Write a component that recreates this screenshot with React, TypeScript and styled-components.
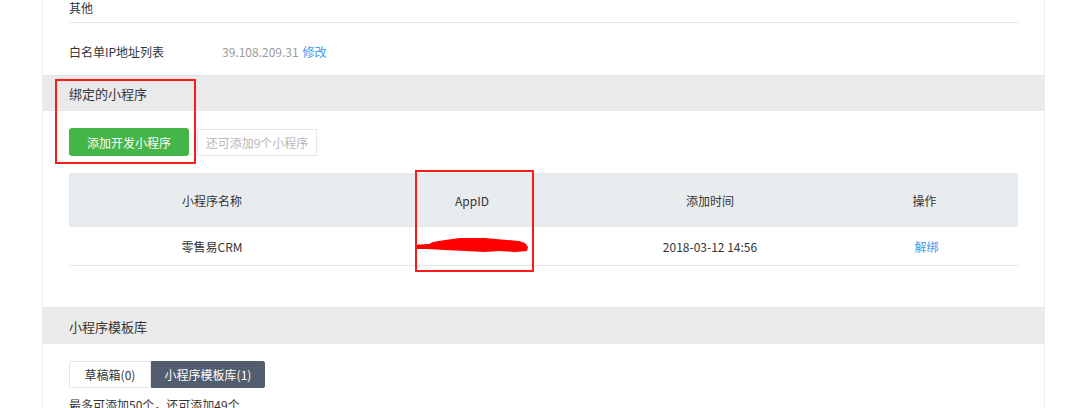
import styled, { createGlobalStyle } from 'styled-components'

const Global = createGlobalStyle`
  html, body {
    margin: 0;
    padding: 0;
    background: #fff;
    font-family: 'Noto Sans CJK SC', 'Liberation Sans', sans-serif;
    color: #353535;
    font-size: 12px;
  }
`

const Page = styled.div`
  position: relative;
  height: 408px;
  overflow: hidden;
  padding-left: 42px;
`

const Panel = styled.div`
  width: 1001px;
  border-left: 1px solid #ececec;
  border-right: 1px solid #ececec;
  min-height: 408px;
`

const Inner = styled.div`
  padding: 0 26px;
`

const OtherRow = styled.div`
  line-height: 16px;
  padding-bottom: 6px;
  border-bottom: 1px solid #e7e7eb;
`

const InfoRow = styled.div`
  display: flex;
  line-height: 18px;
  padding: 20px 0 14px;
`

const InfoLabel = styled.div`
  width: 153px;
`

const InfoValue = styled.div`
  color: #9a9a9a;
`

const Link = styled.a`
  color: #459ae9;
  text-decoration: none;
  cursor: pointer;
  margin-left: 4px;
`

const SectionHead = styled.div<{ h: number }>`
  height: ${(p) => p.h}px;
  line-height: ${(p) => p.h}px;
  background: #eaeaea;
  border-top: 1px solid #e4e4e4;
  box-sizing: border-box;
  padding: 0 26px;
  font-size: 13px;
`

const Actions = styled.div`
  display: flex;
  align-items: center;
  gap: 8px;
  padding: 17px 26px 17px;
`

const GreenButton = styled.button`
  width: 120px;
  height: 28px;
  border: 0;
  border-radius: 3px;
  background: #44b549;
  color: #fff;
  font: inherit;
  font-size: 12px;
  padding: 0;
`

const Hint = styled.div`
  width: 120px;
  height: 27px;
  line-height: 25px;
  box-sizing: border-box;
  border: 1px solid #e7e7eb;
  color: #b8b8b8;
  text-align: center;
`

const Table = styled.div`
  margin: 0 26px;
`

const Row = styled.div<{ head?: boolean }>`
  display: grid;
  grid-template-columns: 286px 234px 242px 1fr;
  height: ${(p) => (p.head ? 54 : 38)}px;
  align-items: center;
  text-align: center;
  background: ${(p) => (p.head ? '#e9ecee' : '#fff')};
  border-bottom: ${(p) => (p.head ? 'none' : '1px solid #e7e7eb')};
`

const Cell = styled.div`
  display: flex;
  justify-content: center;
  align-items: center;
`

const Spacer = styled.div`
  height: 41px;
`

const Tabs = styled.div`
  display: flex;
  padding: 17px 26px 0;
`

const Tab = styled.div<{ active?: boolean; w: number }>`
  width: ${(p) => p.w}px;
  height: 27px;
  line-height: 25px;
  box-sizing: border-box;
  text-align: center;
  border: 1px solid ${(p) => (p.active ? '#525d6e' : '#e7e7eb')};
  background: ${(p) => (p.active ? '#525d6e' : '#fff')};
  color: ${(p) => (p.active ? '#fff' : '#353535')};
  border-radius: ${(p) => (p.active ? '0 2px 2px 0' : '2px 0 0 2px')};
`

const Note = styled.div`
  padding: 8px 26px 0;
  line-height: 18px;
`

const Mark = styled.div<{ x: number; y: number; w: number; h: number }>`
  position: absolute;
  left: ${(p) => p.x}px;
  top: ${(p) => p.y}px;
  width: ${(p) => p.w}px;
  height: ${(p) => p.h}px;
  box-sizing: border-box;
  border: 2px solid #ff1a1a;
  pointer-events: none;
`

const Scribble = () => (
  <svg width="114" height="18" viewBox="0 0 114 18">
    <path
      d="M1 8 L14 7 L18 5 L30 3 L45 1 L70 1 L92 3 L104 4 L110 6 L113 10 L112 14 L100 15 L84 14 L70 15 L50 14 L30 13 L12 12 L2 12 Z"
      fill="#ff0000"
    />
    <path d="M0 9 L16 8" stroke="#ff0000" strokeWidth="2" strokeDasharray="2 1" />
  </svg>
)

export default function App() {
  return (
    <>
      <Global />
      <Page>
        <Panel>
          <Inner>
            <OtherRow>其他</OtherRow>
            <InfoRow>
              <InfoLabel>白名单IP地址列表</InfoLabel>
              <InfoValue>
                39.108.209.31<Link>修改</Link>
              </InfoValue>
            </InfoRow>
          </Inner>
          <SectionHead h={36}>绑定的小程序</SectionHead>
          <Actions>
            <GreenButton>添加开发小程序</GreenButton>
            <Hint>还可添加9个小程序</Hint>
          </Actions>
          <Table>
            <Row head>
              <Cell>小程序名称</Cell>
              <Cell>AppID</Cell>
              <Cell>添加时间</Cell>
              <Cell>操作</Cell>
            </Row>
            <Row>
              <Cell>零售易CRM</Cell>
              <Cell>
                <Scribble />
              </Cell>
              <Cell>2018-03-12 14:56</Cell>
              <Cell>
                <Link>解绑</Link>
              </Cell>
            </Row>
          </Table>
          <Spacer />
          <SectionHead h={37}>小程序模板库</SectionHead>
          <Tabs>
            <Tab w={82}>草稿箱(0)</Tab>
            <Tab w={114} active>
              小程序模板库(1)
            </Tab>
          </Tabs>
          <Note>最多可添加50个，还可添加49个</Note>
        </Panel>
        <Mark x={55} y={79} w={141} h={85} />
        <Mark x={415} y={170} w={119} h={102} />
      </Page>
    </>
  )
}
